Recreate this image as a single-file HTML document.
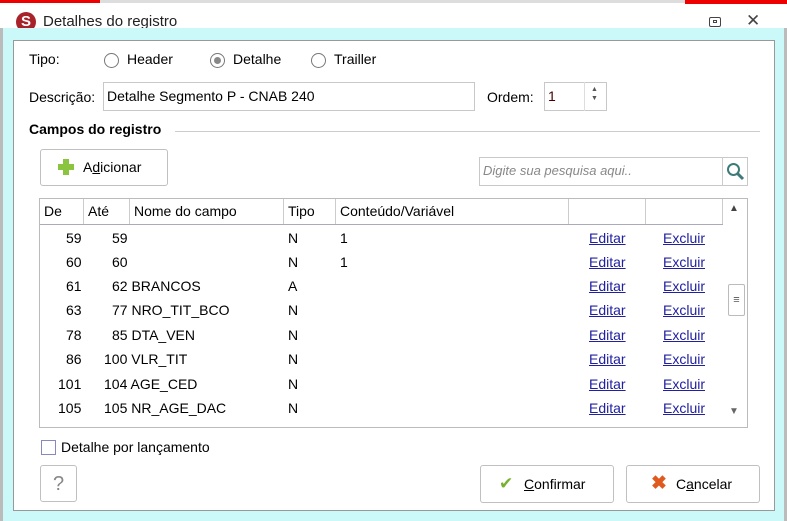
<!DOCTYPE html>
<html><head><meta charset="utf-8"><style>
*{box-sizing:border-box;margin:0;padding:0}
body{width:787px;height:521px;overflow:hidden;background:#fff;font-family:"Liberation Sans",sans-serif;font-size:14px;color:#000;position:relative}
.a{position:absolute;white-space:nowrap}
.frame{left:0;top:28px;width:787px;height:493px;background:#cbf9f9;border-left:3px solid #bbb;border-right:3px solid #bbb}
.panel{left:13px;top:40px;width:762px;height:471px;background:#fff;border:1px solid #999}
.radio{width:15px;height:15px;border:1px solid #777;border-radius:50%;background:#fff}
.inp{border:1px solid #c8c8c8;background:#fff}
.btn{border:1px solid #c0c0c0;border-radius:3px;background:#fff}
.lnk{color:#1a0dab;text-decoration:underline;color:#2020a0}
.hd{top:199px;height:25px;border-right:1px solid #ccc;padding:4px 0 0 4px}
</style></head><body>
<div class="a" style="left:0;top:0;width:787px;height:3px;background:#ddd"></div>
<div class="a" style="left:0;top:0;width:100px;height:3px;background:#e00"></div>
<div class="a" style="left:685px;top:0;width:102px;height:4px;background:#e00"></div>
<div class="a" style="left:16px;top:12px;width:20px;height:20px;border-radius:50%;background:#a8222a;color:#fff;font-weight:bold;font-size:15px;text-align:center;line-height:20px">S</div>
<div class="a" style="left:43px;top:13px;font-size:15px;color:#222">Detalhes do registro</div>
<div class="a" style="left:709px;top:17px;width:12px;height:10px;border:1px solid #444;border-radius:2px"></div>
<div class="a" style="left:713px;top:20px;width:4px;height:3px;border:1px solid #444"></div>
<div class="a" style="left:746px;top:11px;font-size:17px;color:#444">✕</div>
<div class="a frame"></div>
<div class="a panel"></div>

<div class="a" style="left:29px;top:51px">Tipo:</div>
<div class="a radio" style="left:104px;top:53px"></div><div class="a" style="left:127px;top:51px">Header</div>
<div class="a radio" style="left:210px;top:53px"></div><div class="a" style="left:214px;top:57px;width:7px;height:7px;border-radius:50%;background:#888"></div><div class="a" style="left:233px;top:51px">Detalhe</div>
<div class="a radio" style="left:311px;top:53px"></div><div class="a" style="left:334px;top:51px">Trailler</div>

<div class="a" style="left:29px;top:89px">Descrição:</div>
<div class="a inp" style="left:103px;top:82px;width:372px;height:29px"></div>
<div class="a" style="left:107px;top:88px">Detalhe Segmento P - CNAB 240</div>
<div class="a" style="left:487px;top:89px">Ordem:</div>
<div class="a inp" style="left:544px;top:82px;width:63px;height:29px"></div>
<div class="a" style="left:584px;top:82px;width:1px;height:29px;background:#ddd"></div>
<div class="a" style="left:548px;top:88px;color:#400">1</div>
<div class="a" style="left:591px;top:85px;font-size:7px;color:#555;line-height:9px">▲<br>▼</div>

<div class="a" style="left:29px;top:121px;font-weight:bold">Campos do registro</div>
<div class="a" style="left:175px;top:131px;width:585px;height:1px;background:#ccc"></div>

<div class="a btn" style="left:40px;top:149px;width:128px;height:37px"></div>
<div class="a" style="left:63px;top:159px;width:6px;height:16px;background:#8bc53f"></div>
<div class="a" style="left:58px;top:164px;width:16px;height:6px;background:#8bc53f"></div>
<div class="a" style="left:83px;top:159px">A<u>d</u>icionar</div>

<div class="a inp" style="left:479px;top:157px;width:269px;height:29px"></div>
<div class="a" style="left:722px;top:157px;width:1px;height:29px;background:#ccc"></div>
<div class="a" style="left:483px;top:163px;font-style:italic;font-size:13px;color:#888">Digite sua pesquisa aqui..</div>
<svg class="a" style="left:725px;top:161px" width="21" height="21"><circle cx="8.5" cy="8.5" r="5.5" fill="none" stroke="#3d7a7a" stroke-width="2"/><line x1="12.5" y1="12.5" x2="18" y2="18" stroke="#3d7a7a" stroke-width="3"/></svg>

<div class="a" style="left:39px;top:198px;width:709px;height:230px;border:1px solid #bbb"></div>
<div class="a" style="left:40px;top:224px;width:683px;height:1px;background:#aab"></div>
<div class="a hd" style="left:40px;width:44px">De</div>
<div class="a hd" style="left:84px;width:46px">Até</div>
<div class="a hd" style="left:130px;width:154px">Nome do campo</div>
<div class="a hd" style="left:284px;width:52px">Tipo</div>
<div class="a hd" style="left:336px;width:233px">Conteúdo/Variável</div>
<div class="a hd" style="left:569px;width:77px"></div>
<div class="a hd" style="left:646px;width:77px"></div>
<div class="a" style="left:729px;top:203px;font-size:10px;color:#444">▲</div>
<div class="a" style="left:728px;top:284px;width:17px;height:32px;border:1px solid #bbb;border-radius:2px;font-size:11px;text-align:center;line-height:30px;color:#555">≡</div>
<div class="a" style="left:729px;top:406px;font-size:10px;color:#666">▼</div>

<div id="rows"></div>
<div class="a" style="left:66px;top:230px">59</div><div class="a" style="left:112px;top:230px">59</div><div class="a" style="left:288px;top:230px">N</div><div class="a" style="left:340px;top:230px">1</div>
<div class="a" style="left:66px;top:254px">60</div><div class="a" style="left:112px;top:254px">60</div><div class="a" style="left:288px;top:254px">N</div><div class="a" style="left:340px;top:254px">1</div>
<div class="a" style="left:66px;top:278px">61</div><div class="a" style="left:112px;top:278px">62 BRANCOS</div><div class="a" style="left:288px;top:278px">A</div>
<div class="a" style="left:66px;top:302px">63</div><div class="a" style="left:112px;top:302px">77 NRO_TIT_BCO</div><div class="a" style="left:288px;top:302px">N</div>
<div class="a" style="left:66px;top:327px">78</div><div class="a" style="left:112px;top:327px">85 DTA_VEN</div><div class="a" style="left:288px;top:327px">N</div>
<div class="a" style="left:66px;top:351px">86</div><div class="a" style="left:104px;top:351px">100 VLR_TIT</div><div class="a" style="left:288px;top:351px">N</div>
<div class="a" style="left:58px;top:376px">101</div><div class="a" style="left:104px;top:376px">104 AGE_CED</div><div class="a" style="left:288px;top:376px">N</div>
<div class="a" style="left:58px;top:400px">105</div><div class="a" style="left:104px;top:400px">105 NR_AGE_DAC</div><div class="a" style="left:288px;top:400px">N</div>
<div class="a lnk" style="left:589px;top:230px">Editar</div><div class="a lnk" style="left:663px;top:230px">Excluir</div>
<div class="a lnk" style="left:589px;top:254px">Editar</div><div class="a lnk" style="left:663px;top:254px">Excluir</div>
<div class="a lnk" style="left:589px;top:278px">Editar</div><div class="a lnk" style="left:663px;top:278px">Excluir</div>
<div class="a lnk" style="left:589px;top:302px">Editar</div><div class="a lnk" style="left:663px;top:302px">Excluir</div>
<div class="a lnk" style="left:589px;top:327px">Editar</div><div class="a lnk" style="left:663px;top:327px">Excluir</div>
<div class="a lnk" style="left:589px;top:351px">Editar</div><div class="a lnk" style="left:663px;top:351px">Excluir</div>
<div class="a lnk" style="left:589px;top:376px">Editar</div><div class="a lnk" style="left:663px;top:376px">Excluir</div>
<div class="a lnk" style="left:589px;top:400px">Editar</div><div class="a lnk" style="left:663px;top:400px">Excluir</div>

<div class="a" style="left:41px;top:440px;width:15px;height:15px;border:1px solid #8888bb"></div>
<div class="a" style="left:61px;top:439px">Detalhe por lançamento</div>

<div class="a btn" style="left:40px;top:465px;width:37px;height:37px;color:#888;font-size:20px;text-align:center;line-height:37px">?</div>
<div class="a btn" style="left:480px;top:465px;width:134px;height:38px"></div>
<div class="a" style="left:499px;top:474px;color:#7ab030;font-size:17px">✔</div>
<div class="a" style="left:524px;top:476px"><u>C</u>onfirmar</div>
<div class="a btn" style="left:626px;top:465px;width:134px;height:38px"></div>
<div class="a" style="left:651px;top:472px;color:#e05a20;font-size:19px;font-weight:bold">✖</div>
<div class="a" style="left:676px;top:476px">C<u>a</u>ncelar</div>
</body></html>
